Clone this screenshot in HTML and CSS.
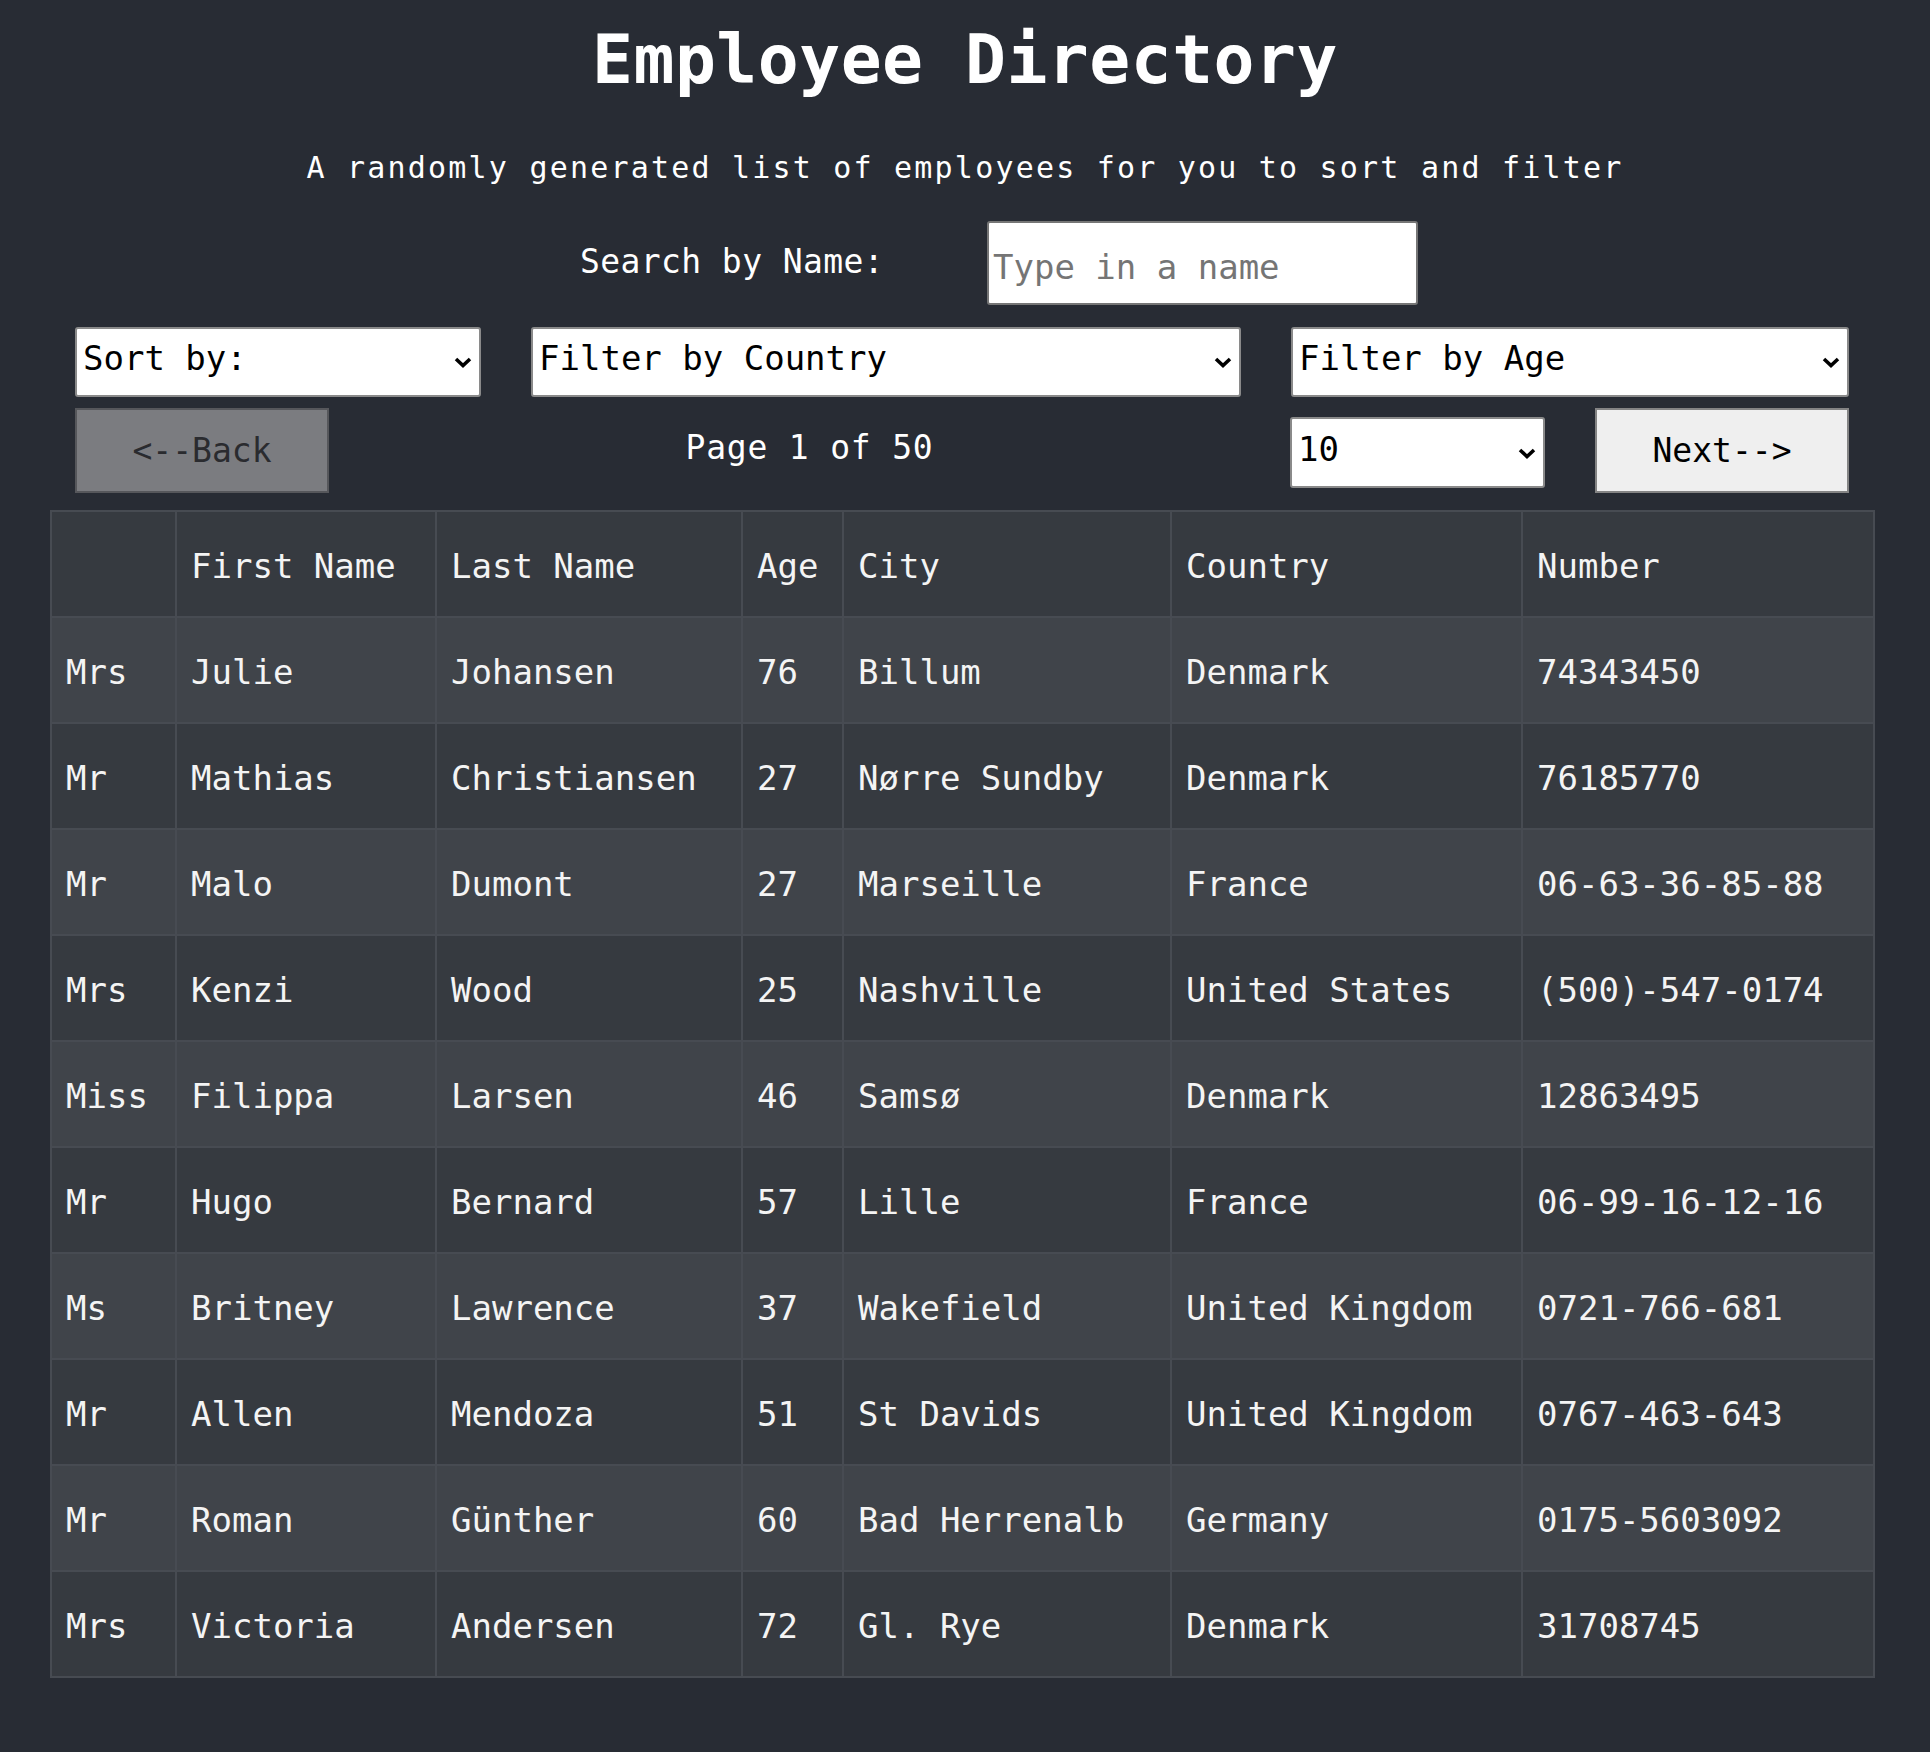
FILE: index.html
```html
<!DOCTYPE html>
<html lang="en">
<head>
<meta charset="utf-8">
<title>Employee Directory</title>
<link rel="stylesheet" href="styles.css">
</head>
<body>
<main class="app">
  <h1 class="title">Employee Directory</h1>
  <p class="subtitle">A randomly generated list of employees for you to sort and filter</p>

  <div class="search">
    <label class="search-label" for="name">Search by Name:</label>
    <input id="name" class="search-input" type="text" placeholder="Type in a name">
  </div>

  <div class="controls">
    <div class="filters">
      <div class="select-wrap w-sort">
        <select class="select"><option>Sort by:</option></select>
        <svg class="chev" viewBox="0 0 18 11" width="18" height="11"><polyline points="2,2 9,8.5 16,2" fill="none" stroke="#000" stroke-width="3.6"/></svg>
      </div>
      <div class="select-wrap w-country">
        <select class="select"><option>Filter by Country</option></select>
        <svg class="chev" viewBox="0 0 18 11" width="18" height="11"><polyline points="2,2 9,8.5 16,2" fill="none" stroke="#000" stroke-width="3.6"/></svg>
      </div>
      <div class="select-wrap w-age">
        <select class="select"><option>Filter by Age</option></select>
        <svg class="chev" viewBox="0 0 18 11" width="18" height="11"><polyline points="2,2 9,8.5 16,2" fill="none" stroke="#000" stroke-width="3.6"/></svg>
      </div>
    </div>

    <div class="pager">
      <button class="btn btn-back" type="button" disabled>&lt;--Back</button>
      <span class="page-info">Page 1 of 50</span>
      <div class="pager-right">
        <div class="select-wrap w-size">
          <select class="select select-size"><option>10</option></select>
          <svg class="chev" viewBox="0 0 18 11" width="18" height="11"><polyline points="2,2 9,8.5 16,2" fill="none" stroke="#000" stroke-width="3.6"/></svg>
        </div>
        <button class="btn btn-next" type="button">Next--&gt;</button>
      </div>
    </div>
  </div>

  <table class="employees">
    <colgroup>
      <col class="c-title"><col class="c-first"><col class="c-last"><col class="c-age"><col class="c-city"><col class="c-country"><col class="c-number">
    </colgroup>
    <thead>
      <tr><th></th><th>First Name</th><th>Last Name</th><th>Age</th><th>City</th><th>Country</th><th>Number</th></tr>
    </thead>
    <tbody>
      <tr><td>Mrs</td><td>Julie</td><td>Johansen</td><td>76</td><td>Billum</td><td>Denmark</td><td>74343450</td></tr>
      <tr><td>Mr</td><td>Mathias</td><td>Christiansen</td><td>27</td><td>Nørre Sundby</td><td>Denmark</td><td>76185770</td></tr>
      <tr><td>Mr</td><td>Malo</td><td>Dumont</td><td>27</td><td>Marseille</td><td>France</td><td>06-63-36-85-88</td></tr>
      <tr><td>Mrs</td><td>Kenzi</td><td>Wood</td><td>25</td><td>Nashville</td><td>United States</td><td>(500)-547-0174</td></tr>
      <tr><td>Miss</td><td>Filippa</td><td>Larsen</td><td>46</td><td>Samsø</td><td>Denmark</td><td>12863495</td></tr>
      <tr><td>Mr</td><td>Hugo</td><td>Bernard</td><td>57</td><td>Lille</td><td>France</td><td>06-99-16-12-16</td></tr>
      <tr><td>Ms</td><td>Britney</td><td>Lawrence</td><td>37</td><td>Wakefield</td><td>United Kingdom</td><td>0721-766-681</td></tr>
      <tr><td>Mr</td><td>Allen</td><td>Mendoza</td><td>51</td><td>St Davids</td><td>United Kingdom</td><td>0767-463-643</td></tr>
      <tr><td>Mr</td><td>Roman</td><td>Günther</td><td>60</td><td>Bad Herrenalb</td><td>Germany</td><td>0175-5603092</td></tr>
      <tr><td>Mrs</td><td>Victoria</td><td>Andersen</td><td>72</td><td>Gl. Rye</td><td>Denmark</td><td>31708745</td></tr>
    </tbody>
  </table>
</main>
</body>
</html>
```

FILE: styles.css
```css
html {
  background: #282c34;
}
body {
  margin: 0;
  background: #282c34;
  color: #ffffff;
  font-family: "DejaVu Sans Mono", "Liberation Mono", monospace;
  font-size: 34px;
}
.app {
  padding: 20px 0 60px;
}
.title {
  margin: 0;
  text-align: center;
  font-size: 68px;
  line-height: 80px;
  font-weight: bold;
  letter-spacing: 0.5px;
  color: #ffffff;
}
.subtitle {
  margin: 50px 0 0;
  text-align: center;
  font-size: 30px;
  line-height: 36px;
  letter-spacing: 2.2px;
  color: #ffffff;
}
.search {
  display: flex;
  align-items: center;
  margin: 35px 0 0 580px;
  height: 84px;
}
.search-label {
  width: 407px;
  font-size: 33px;
  letter-spacing: 0.4px;
  margin-top: -4px;
}
.search-input {
  box-sizing: border-box;
  width: 431px;
  height: 84px;
  margin: 0;
  padding: 8px 4px 0;
  border: 2px solid #767676;
  border-radius: 3px;
  background: #ffffff;
  color: #000;
  font-family: "DejaVu Sans Mono", "Liberation Mono", monospace;
  font-size: 34px;
}
.search-input::placeholder {
  color: #757575;
}
.controls {
  width: 1774px;
  margin: 22px 0 0 75px;
}
.filters {
  display: flex;
  gap: 50px;
  height: 70px;
}
.select-wrap {
  position: relative;
  height: 100%;
}
.w-sort { width: 406px; }
.w-country { width: 710px; }
.w-age { width: 558px; }
.w-size { width: 255px; height: 71px; }
.select {
  appearance: none;
  -webkit-appearance: none;
  box-sizing: border-box;
  width: 100%;
  height: 100%;
  margin: 0;
  padding: 0 40px 8px 6px;
  border: 2px solid #8a8a8a;
  border-radius: 3px;
  background: #ffffff;
  color: #000000;
  font-family: "DejaVu Sans Mono", "Liberation Mono", monospace;
  font-size: 34px;
}
.chev {
  position: absolute;
  right: 9px;
  top: 50%;
  margin-top: -5px;
  pointer-events: none;
}
.pager {
  display: flex;
  align-items: center;
  margin-top: 11px;
  height: 85px;
}
.btn {
  box-sizing: border-box;
  width: 254px;
  height: 85px;
  margin: 0;
  padding: 0;
  border-radius: 0;
  font-family: "DejaVu Sans Mono", "Liberation Mono", monospace;
  font-size: 33px;
  cursor: pointer;
}
.btn-back {
  background: #7b7c80;
  border: 2px solid #56575b;
  color: #2a2b2f;
}
.btn-next {
  background: #efefef;
  border: 2px solid #848484;
  color: #000000;
}
.page-info {
  flex: 1;
  text-align: center;
  font-size: 33px;
  letter-spacing: 0.8px;
  margin-top: -6px;
}
.pager-right {
  display: flex;
  align-items: center;
  gap: 50px;
  width: 559px;
}
.pager-right .w-size {
  margin-top: 4px;
}
.employees {
  table-layout: fixed;
  width: 1823px;
  margin: 17px 0 0 50px;
  border-collapse: collapse;
  border: 2px solid #4a4e55;
}
.c-title { width: 125px; }
.c-first { width: 260px; }
.c-last { width: 306px; }
.c-age { width: 101px; }
.c-city { width: 328px; }
.c-country { width: 351px; }
.c-number { width: 352px; }
.employees th,
.employees td {
  height: 100px;
  padding: 4px 14px 0;
  border: 2px solid #474b52;
  text-align: left;
  vertical-align: middle;
  font-weight: normal;
  white-space: nowrap;
  color: #f4f4f4;
}
.employees thead tr {
  background: #363a40;
}
.employees tbody tr:nth-child(odd) {
  background: #40444a;
}
.employees tbody tr:nth-child(even) {
  background: #363a40;
}
```
